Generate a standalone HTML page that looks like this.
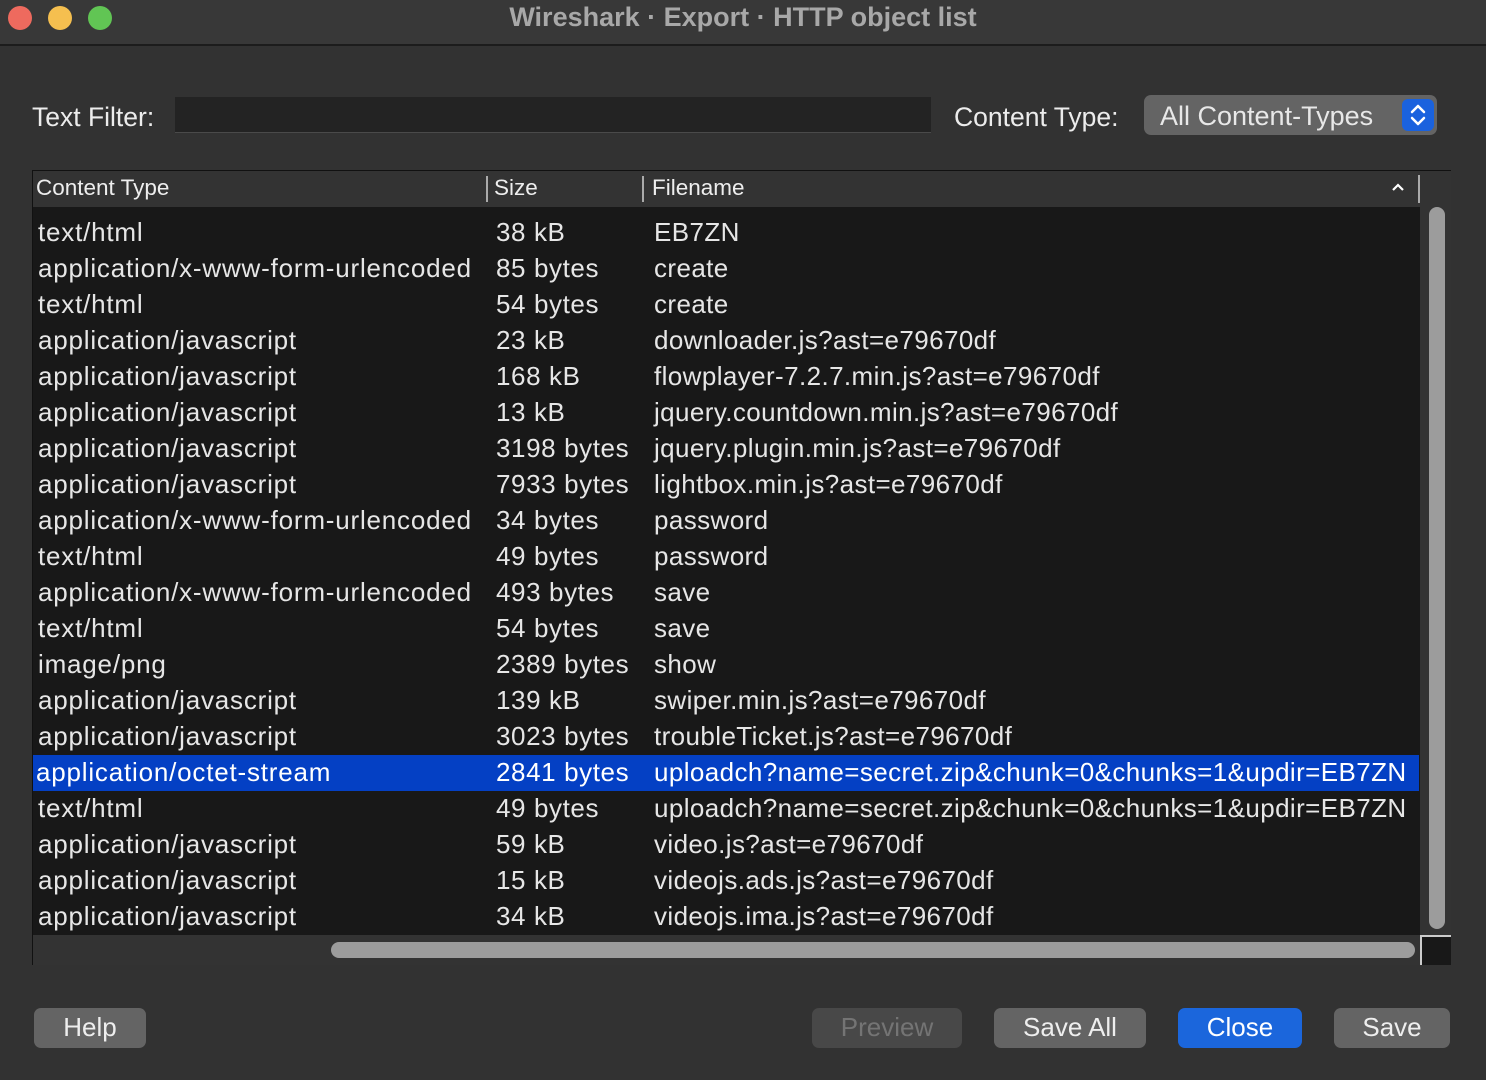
<!DOCTYPE html>
<html><head><meta charset="utf-8"><style>
*{margin:0;padding:0;box-sizing:border-box}
body{width:1486px;height:1080px;background:#323232;font-family:"Liberation Sans",sans-serif;color:#e6e6e6;position:relative;overflow:hidden}
.abs{position:absolute}
.title{left:0;top:0;width:1486px;height:46px;background:#383838;border-bottom:2px solid #1c1c1c}
.dot{width:24px;height:24px;border-radius:50%;top:6px}
.ttl{top:2px;left:0;width:1486px;text-align:center;font-weight:bold;font-size:27px;color:#a8a8a8}
.lbl{font-size:26.5px;color:#ececec}
.table{left:32px;top:170px;width:1419px;height:795px;border:1px solid #111;background:#181818}
.hdr{left:0;top:0;width:1388px;height:36px;background:#333;font-size:22.5px;color:#eee}
.row{position:absolute;left:0;width:1386px;height:36px;font-size:26px;line-height:34px;white-space:nowrap}
.row span{position:absolute}
.c1{left:5px;letter-spacing:0.8px}.c2{left:463px;letter-spacing:0.6px}.c3{left:621px;letter-spacing:0.4px}
.sel{background:#0440c4;color:#fff}
.btn{height:40px;border-radius:7px;background:#646464;font-size:26px;text-align:center;line-height:38px;color:#eee;top:1008px}
</style></head><body>
<div class="abs title"></div>
<div class="abs dot" style="left:8px;background:#ee6a5e"></div>
<div class="abs dot" style="left:48px;background:#f5bf4f"></div>
<div class="abs dot" style="left:88px;background:#61c554"></div>
<div class="abs ttl">Wireshark · Export · HTTP object list</div>

<div class="abs lbl" style="left:32px;top:102px">Text Filter:</div>
<div class="abs" style="left:175px;top:97px;width:756px;height:36px;background:#232323;border-bottom:1px solid #4a4a4a"></div>
<div class="abs lbl" style="left:954px;top:102px">Content Type:</div>
<div class="abs" style="left:1144px;top:95px;width:293px;height:40px;border-radius:7px;background:#646464"></div>
<div class="abs lbl" style="left:1160px;top:101px;color:#e8e8e8;font-size:27px">All Content-Types</div>
<div class="abs" style="left:1402px;top:99px;width:32px;height:32px;border-radius:6px;background:#1a62de"></div>
<svg class="abs" style="left:1402px;top:99px" width="32" height="32"><path d="M10 13 L16 7 L22 13 M10 19 L16 25 L22 19" fill="none" stroke="#fff" stroke-width="2.5" stroke-linecap="round" stroke-linejoin="round"/></svg>

<div class="abs table">
 <div class="abs hdr">
  <span class="abs" style="left:3px;top:4px">Content Type</span>
  <div class="abs" style="left:453px;top:5px;width:2px;height:26px;background:#aaa"></div>
  <span class="abs" style="left:461px;top:4px">Size</span>
  <div class="abs" style="left:609px;top:5px;width:2px;height:26px;background:#aaa"></div>
  <span class="abs" style="left:619px;top:4px">Filename</span>
  <svg class="abs" style="left:1358px;top:12px" width="14" height="10"><path d="M2 7 L7 2 L12 7" fill="none" stroke="#fff" stroke-width="2.2"/></svg>
  <div class="abs" style="left:1385px;top:4px;width:2px;height:28px;background:#aaa"></div>
 </div>
 <div class="abs" style="left:0;top:36px;width:1387px;height:728px;overflow:hidden">
  <div class="row" style="top:-33px"><span class="c1">text/html</span><span class="c2">12 kB</span><span class="c3">,</span></div>
  <div class="row" style="top:8px"><span class="c1">text/html</span><span class="c2">38 kB</span><span class="c3">EB7ZN</span></div>
  <div class="row" style="top:44px"><span class="c1">application/x-www-form-urlencoded</span><span class="c2">85 bytes</span><span class="c3">create</span></div>
  <div class="row" style="top:80px"><span class="c1">text/html</span><span class="c2">54 bytes</span><span class="c3">create</span></div>
  <div class="row" style="top:116px"><span class="c1">application/javascript</span><span class="c2">23 kB</span><span class="c3">downloader.js?ast=e79670df</span></div>
  <div class="row" style="top:152px"><span class="c1">application/javascript</span><span class="c2">168 kB</span><span class="c3">flowplayer-7.2.7.min.js?ast=e79670df</span></div>
  <div class="row" style="top:188px"><span class="c1">application/javascript</span><span class="c2">13 kB</span><span class="c3">jquery.countdown.min.js?ast=e79670df</span></div>
  <div class="row" style="top:224px"><span class="c1">application/javascript</span><span class="c2">3198 bytes</span><span class="c3">jquery.plugin.min.js?ast=e79670df</span></div>
  <div class="row" style="top:260px"><span class="c1">application/javascript</span><span class="c2">7933 bytes</span><span class="c3">lightbox.min.js?ast=e79670df</span></div>
  <div class="row" style="top:296px"><span class="c1">application/x-www-form-urlencoded</span><span class="c2">34 bytes</span><span class="c3">password</span></div>
  <div class="row" style="top:332px"><span class="c1">text/html</span><span class="c2">49 bytes</span><span class="c3">password</span></div>
  <div class="row" style="top:368px"><span class="c1">application/x-www-form-urlencoded</span><span class="c2">493 bytes</span><span class="c3">save</span></div>
  <div class="row" style="top:404px"><span class="c1">text/html</span><span class="c2">54 bytes</span><span class="c3">save</span></div>
  <div class="row" style="top:440px"><span class="c1">image/png</span><span class="c2">2389 bytes</span><span class="c3">show</span></div>
  <div class="row" style="top:476px"><span class="c1">application/javascript</span><span class="c2">139 kB</span><span class="c3">swiper.min.js?ast=e79670df</span></div>
  <div class="row" style="top:512px"><span class="c1">application/javascript</span><span class="c2">3023 bytes</span><span class="c3">troubleTicket.js?ast=e79670df</span></div>
  <div class="row sel" style="top:548px"><span class="c1" style="left:3px">application/octet-stream</span><span class="c2">2841 bytes</span><span class="c3">uploadch?name=secret.zip&amp;chunk=0&amp;chunks=1&amp;updir=EB7ZN</span></div>
  <div class="row" style="top:584px"><span class="c1">text/html</span><span class="c2">49 bytes</span><span class="c3">uploadch?name=secret.zip&amp;chunk=0&amp;chunks=1&amp;updir=EB7ZN</span></div>
  <div class="row" style="top:620px"><span class="c1">application/javascript</span><span class="c2">59 kB</span><span class="c3">video.js?ast=e79670df</span></div>
  <div class="row" style="top:656px"><span class="c1">application/javascript</span><span class="c2">15 kB</span><span class="c3">videojs.ads.js?ast=e79670df</span></div>
  <div class="row" style="top:692px"><span class="c1">application/javascript</span><span class="c2">34 kB</span><span class="c3">videojs.ima.js?ast=e79670df</span></div>
 </div>
 <div class="abs" style="left:1387px;top:0;width:31px;height:764px;background:#333"></div>
 <div class="abs" style="left:1396px;top:36px;width:16px;height:722px;border-radius:8px;background:#9c9c9c"></div>
 <div class="abs" style="left:0;top:764px;width:1387px;height:30px;background:#333"></div>
 <div class="abs" style="left:298px;top:771px;width:1084px;height:16px;border-radius:8px;background:#9c9c9c"></div>
 <div class="abs" style="left:1387px;top:764px;width:31px;height:30px;background:#181818;border-left:2px solid #ccc;border-top:2px solid #ccc"></div>
</div>

<div class="abs btn" style="left:34px;width:112px">Help</div>
<div class="abs btn" style="left:812px;width:150px;background:#484848;color:#747474">Preview</div>
<div class="abs btn" style="left:994px;width:152px">Save All</div>
<div class="abs btn" style="left:1178px;width:124px;background:#1b66dc;color:#fff">Close</div>
<div class="abs btn" style="left:1334px;width:116px">Save</div>
</body></html>
